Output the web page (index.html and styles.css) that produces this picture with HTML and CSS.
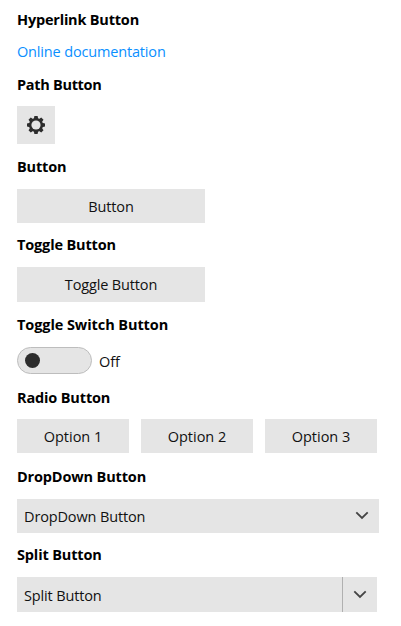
FILE: index.html
```html
<!DOCTYPE html>
<html lang="en">
<head>
<meta charset="utf-8">
<title>Buttons</title>
<link rel="stylesheet" href="styles.css">
</head>
<body>
<main class="gallery">
  <section class="hyperlink">
    <h2>Hyperlink Button</h2>
    <a class="link" href="#">Online documentation</a>
  </section>
  <section class="path">
    <h2>Path Button</h2>
    <button class="button icon-button" aria-label="Settings">
      <svg width="18" height="18" viewBox="-9 -9 18 18">
        <g fill="#2d2d2d">
          <path id="t" d="M-2.2-6 -1.6-9H1.6L2.2-6V6L1.6 9H-1.6L-2.2 6Z"/>
          <use href="#t" transform="rotate(45)"/>
          <use href="#t" transform="rotate(90)"/>
          <use href="#t" transform="rotate(135)"/>
          <circle r="7"/>
        </g>
        <circle r="4.6" fill="#e5e5e5"/>
      </svg>
    </button>
  </section>
  <section class="plain">
    <h2>Button</h2>
    <button class="button wide">Button</button>
  </section>
  <section class="toggle">
    <h2>Toggle Button</h2>
    <button class="button wide tall">Toggle Button</button>
  </section>
  <section class="switch-section">
    <h2 class="looser">Toggle Switch Button</h2>
    <div class="switch"><span class="track"><span class="thumb"></span></span><span>Off</span></div>
  </section>
  <section class="radio">
    <h2>Radio Button</h2>
    <div class="options">
      <button class="button">Option 1</button>
      <button class="button">Option 2</button>
      <button class="button">Option 3</button>
    </div>
  </section>
  <section class="dropdown-section">
    <h2>DropDown Button</h2>
    <button class="button dropdown"><span>DropDown Button</span>
      <svg class="chevron" width="14" height="9" viewBox="0 0 14 9"><path d="M1.3 1.3 7 7 12.7 1.3"/></svg>
    </button>
  </section>
  <section class="split-section">
    <h2>Split Button</h2>
    <div class="split">
      <button class="button tall split-main">Split Button</button>
      <button class="button tall split-arrow" aria-label="More"><svg class="chevron" width="14" height="9" viewBox="0 0 14 9"><path d="M1.3 1.3 7 7 12.7 1.3"/></svg></button>
    </div>
  </section>
</main>
</body>
</html>
```
FILE: styles.css
```css
* { box-sizing: border-box; }
body {
  margin: 0;
  background: #fff;
  color: #111;
  font: 400 14.5px/20px "Open Sans", "Noto Sans", sans-serif;
  letter-spacing: -0.14px;
}
.gallery {
  display: flex;
  flex-direction: column;
  gap: 12px;
  width: 379px;
  padding: 10px 0 0 17px;
}
section {
  display: flex;
  flex-direction: column;
  align-items: flex-start;
  gap: 12px;
}
h2 { margin: 0; color: #000; font-size: 14.5px; line-height: 20px; font-weight: 700; letter-spacing: -0.15px; white-space: nowrap; }
.hyperlink h2 { letter-spacing: -0.2px; }
.path h2 { letter-spacing: -0.3px; }
.looser { letter-spacing: -0.08px; }
.link { color: #0a8fff; text-decoration: none; letter-spacing: -0.16px; margin-bottom: 1px; }
.path { gap: 11px; margin-bottom: 1px; }
.toggle { margin-bottom: 1px; }
.switch-section { margin-bottom: 2px; }
.radio { gap: 11px; margin-bottom: 2px; }
.button {
  display: flex;
  align-items: center;
  justify-content: center;
  height: 34px;
  padding: 1px 0 0;
  border: 0;
  border-radius: 0;
  background: #e5e5e5;
  color: #111;
  font: inherit;
  letter-spacing: inherit;
}
.icon-button { width: 38px; height: 38px; padding: 0; }
.wide { width: 188px; }
.tall { height: 35px; }
.switch { display: flex; gap: 7px; height: 27px; line-height: 29px; }
.track {
  display: flex;
  align-items: center;
  width: 75px;
  height: 27px;
  padding-left: 7px;
  border: 1px solid #bdbdbd;
  border-radius: 14px;
  background: #e5e5e5;
}
.thumb { width: 15px; height: 15px; border-radius: 50%; background: #2d2d2d; }
.options { display: flex; gap: 12px; }
.options .button { width: 112px; letter-spacing: 0; }
.dropdown { width: 362px; justify-content: space-between; padding: 1px 10px 0 7px; }
.chevron { display: block; margin-bottom: 2px; fill: none; stroke: #444; stroke-width: 1.8; }
.split { display: flex; width: 360px; }
.split-main { flex: 1; justify-content: flex-start; padding: 2px 0 0 7px; }
.split-arrow { width: 35px; border-left: 1px solid #b0b0b0; padding: 0; }
.split-arrow .chevron { margin-bottom: 0; margin-right: 1px; }
```
